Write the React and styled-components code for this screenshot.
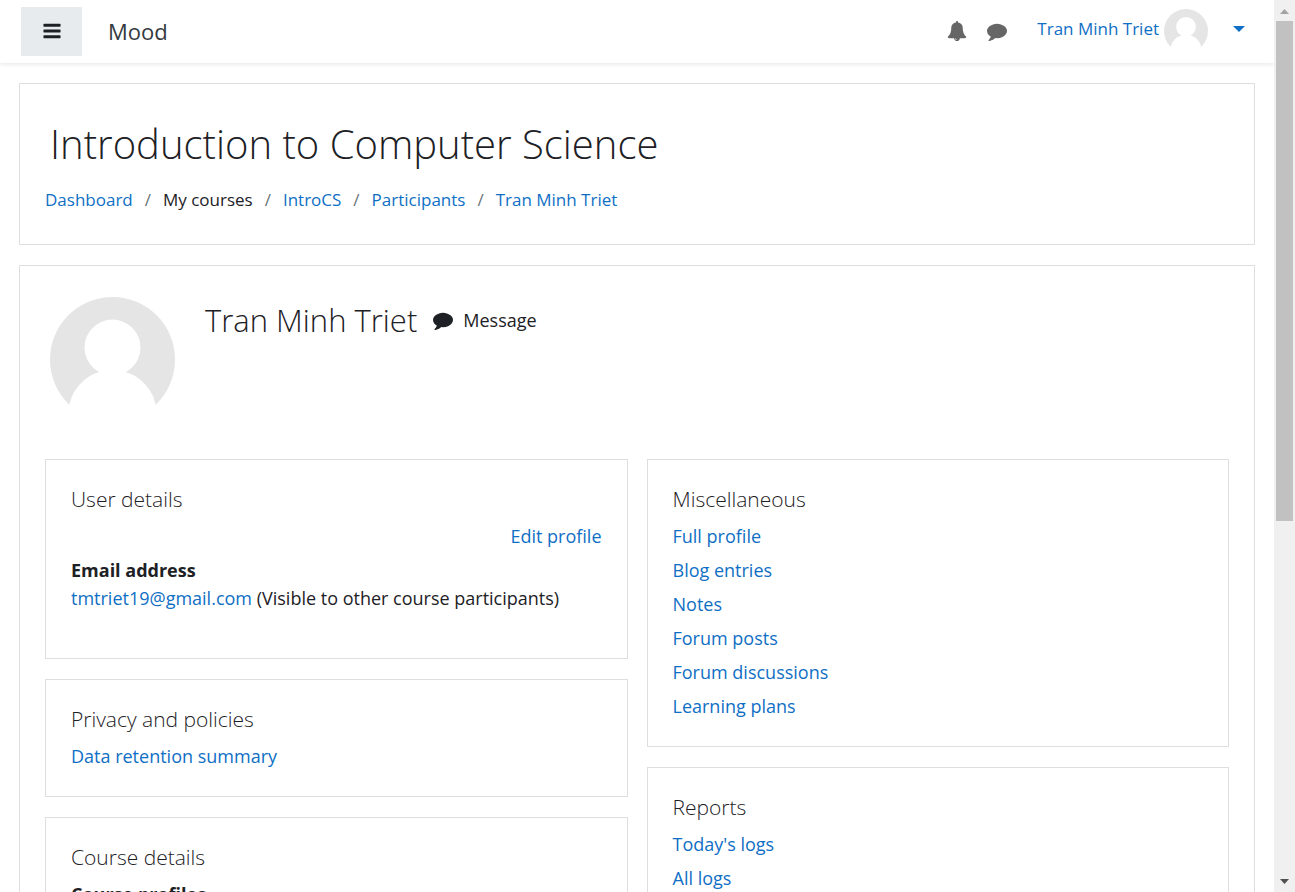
import React from "react";
import styled, { createGlobalStyle } from "styled-components";

const color = {
  link: "#0f6fc5",
  text: "#1d2125",
  icon: "#666666",
  border: "#dedede",
  muted: "#6a737b",
};

const GlobalStyle = createGlobalStyle`
  *, *::before, *::after { box-sizing: border-box; }
  body {
    margin: 0;
    background: #fff;
    color: ${color.text};
    font-family: "Open Sans", "Noto Sans", sans-serif;
    font-size: 18px;
    line-height: 28px;
  }
  h1, h2, h3, ul, ol, dl, dd, dt { margin: 0; padding: 0; }
  ul, ol { list-style: none; }
`;

const Shell = styled.div`
  display: flex;
  height: 100vh;
  overflow: hidden;
`;

const Page = styled.div`
  flex: 1;
  min-width: 0;
  overflow: hidden;
`;

const Navbar = styled.header`
  display: flex;
  align-items: center;
  height: 63px;
  padding: 0 28px 0 21px;
  background: #fff;
  box-shadow: 0 2px 4px rgba(0, 0, 0, 0.08);
`;

const DrawerToggle = styled.button`
  display: grid;
  place-items: center;
  width: 61px;
  height: 49px;
  padding: 0 0 2px;
  border: 0;
  background: #e7ebee;
  color: ${color.text};
`;

const Brand = styled.a`
  margin-left: 26px;
  padding-bottom: 2px;
  color: #343a40;
  font-size: 22px;
  text-decoration: none;
`;

const NavTools = styled.div`
  display: flex;
  align-items: center;
  gap: 20px;
  margin-left: auto;
  padding-bottom: 2px;
`;

const IconButton = styled.button`
  display: grid;
  place-items: center;
  padding: 0;
  border: 0;
  background: none;
  color: ${color.icon};
`;

const UserMenu = styled.button`
  display: flex;
  align-items: center;
  gap: 5px;
  margin-left: 10px;
  padding: 0;
  border: 0;
  background: none;
  color: ${color.link};
  font: inherit;
  font-size: 17px;
`;

const UserName = styled.span`
  padding-bottom: 3px;
`;

const Caret = styled.span`
  margin: 0 1px 4px 20px;
  border: 6px solid transparent;
  border-top-color: ${color.link};
  border-bottom: 0;
`;

const Main = styled.main`
  display: flex;
  flex-direction: column;
  gap: 20px;
  padding: 20px 19px;
`;

const Card = styled.section`
  padding: 25px;
  border: 1px solid ${color.border};
`;

const Title = styled.h1`
  margin: 7px 5px 14px;
  font-size: 40px;
  font-weight: 300;
  line-height: 56px;
`;

const Crumbs = styled.ol`
  display: flex;
  flex-wrap: wrap;
  padding-bottom: 5px;
  font-size: 17px;
`;

const Crumb = styled.li`
  & + &::before {
    content: "/";
    padding: 0 12px;
    color: ${color.muted};
  }
`;

const Link = styled.a`
  color: ${color.link};
  text-decoration: none;
`;

const ProfileHead = styled.div`
  display: flex;
  align-items: flex-start;
  margin-bottom: 37px;
  padding: 6px 5px 0;
`;

const NameRow = styled.div`
  display: flex;
  align-items: center;
  margin-left: 30px;
  padding-top: 1px;
`;

const Name = styled.h2`
  font-size: 31px;
  font-weight: 300;
  line-height: 44px;
`;

const MessageLink = styled.a`
  display: flex;
  align-items: center;
  gap: 10px;
  margin-left: 16px;
  color: ${color.text};
  text-decoration: none;
`;

const Columns = styled.div`
  display: grid;
  grid-template-columns: 1fr 1fr;
  gap: 19px;
`;

const Column = styled.div`
  display: flex;
  flex-direction: column;
  gap: 20px;
`;

const CardTitle = styled.h3`
  margin-bottom: 9px;
  font-size: 21px;
  font-weight: 300;
  line-height: 28px;
`;

const LinkList = styled.ul`
  display: flex;
  flex-direction: column;
  gap: 6px;
  padding-bottom: 1px;
`;

const EditRow = styled.div`
  margin-bottom: 6px;
  text-align: right;
`;

const Details = styled.dl`
  padding-bottom: 21px;

  dt { font-weight: 700; }
`;

const ScrollRail = styled.div`
  display: flex;
  flex-direction: column;
  align-items: center;
  width: 21px;
  background: #f0f0f0;
`;

const ScrollArrow = styled.svg`
  flex: none;
  width: 17px;
  height: 21px;
`;

const ScrollThumb = styled.div`
  width: 17px;
  height: 56%;
  margin-bottom: auto;
  background: #c1c1c1;
`;

const paths = {
  bars: "M1664 1344v128q0 26-19 45t-45 19h-1408q-26 0-45-19t-19-45v-128q0-26 19-45t45-19h1408q26 0 45 19t19 45zm0-512v128q0 26-19 45t-45 19h-1408q-26 0-45-19t-19-45v-128q0-26 19-45t45-19h1408q26 0 45 19t19 45zm0-512v128q0 26-19 45t-45 19h-1408q-26 0-45-19t-19-45v-128q0-26 19-45t45-19h1408q26 0 45 19t19 45z",
  bell: "M912 1696q0-16-16-16-59 0-101.500-42.500t-42.500-101.500q0-16-16-16t-16 16q0 73 51.500 124.500t124.500 51.500q16 0 16-16zm816-288q0 52-38 90t-90 38h-448q0 106-75 181t-181 75-181-75-75-181h-448q-52 0-90-38t-38-90q50-42 91-88t85-119.500 74.500-158.500 50-206 19.500-260q0-152 117-282.500t307-158.500q-8-19-8-39 0-40 28-68t68-28 68 28 28 68q0 20-8 39 190 28 307 158.500t117 282.500q0 139 19.500 260t50 206 74.500 158.500 85 119.500 91 88z",
  comment: "M1792 896q0 174-120 321.500t-326 233-450 85.500q-70 0-145-8-198 175-460 242-49 14-114 22h-5q-15 0-27-10.500t-16-27.500v-1q-3-4-.5-12t2-10 4.500-9.500l6-9 7-8.500 8-9q7-8 31-34.500t34.500-38 31-39.500 32.500-51 27-59 26-76q-157-89-247.500-220t-90.500-281q0-130 71-248.500t191-204.500 286-136.500 348-50.500 348 50.500 286 136.500 191 204.500 71 248.500z",
};

const Icon = ({ name }) => (
  <svg width="20" height="20" viewBox="0 0 1792 1792" fill="currentColor" aria-hidden="true">
    <path d={paths[name]} />
  </svg>
);

const Avatar = ({ size }) => (
  <svg width={size} height={size} viewBox="0 0 125 125" aria-hidden="true">
    <circle cx="62.5" cy="62.5" r="62.5" fill="#e5e5e5" />
    <circle cx="62.5" cy="50.5" r="28" fill="#fff" />
    <circle cx="62.5" cy="117.300" r="44.300" fill="#fff" />
  </svg>
);

const crumbs = [
  { label: "Dashboard", link: true },
  { label: "My courses" },
  { label: "IntroCS", link: true },
  { label: "Participants", link: true },
  { label: "Tran Minh Triet", link: true },
];

const LinkCard = ({ title, links }) => (
  <Card>
    <CardTitle>{title}</CardTitle>
    <LinkList>
      {links.map((label) => (
        <li key={label}>
          <Link href="#">{label}</Link>
        </li>
      ))}
    </LinkList>
  </Card>
);

export default function App() {
  return (
    <Shell>
      <GlobalStyle />
      <Page>
        <Navbar>
          <DrawerToggle type="button" aria-label="Side panel">
            <Icon name="bars" />
          </DrawerToggle>
          <Brand href="#">Mood</Brand>
          <NavTools>
            <IconButton type="button" aria-label="Notifications">
              <Icon name="bell" />
            </IconButton>
            <IconButton type="button" aria-label="Messages">
              <Icon name="comment" />
            </IconButton>
            <UserMenu type="button">
              <UserName>Tran Minh Triet</UserName>
              <Avatar size={44} />
              <Caret />
            </UserMenu>
          </NavTools>
        </Navbar>
        <Main>
          <Card>
            <Title>Introduction to Computer Science</Title>
            <nav aria-label="Breadcrumb">
              <Crumbs>
                {crumbs.map(({ label, link }) => (
                  <Crumb key={label}>{link ? <Link href="#">{label}</Link> : label}</Crumb>
                ))}
              </Crumbs>
            </nav>
          </Card>
          <Card>
            <ProfileHead>
              <Avatar size={125} />
              <NameRow>
                <Name>Tran Minh Triet</Name>
                <MessageLink href="#">
                  <Icon name="comment" />
                  Message
                </MessageLink>
              </NameRow>
            </ProfileHead>
            <Columns>
              <Column>
                <Card>
                  <CardTitle>User details</CardTitle>
                  <EditRow>
                    <Link href="#">Edit profile</Link>
                  </EditRow>
                  <Details>
                    <dt>Email address</dt>
                    <dd>
                      <Link href="#">tmtriet19@gmail.com</Link> (Visible to other course participants)
                    </dd>
                  </Details>
                </Card>
                <LinkCard title="Privacy and policies" links={["Data retention summary"]} />
                <Card>
                  <CardTitle>Course details</CardTitle>
                  <Details>
                    <dt>Course profiles</dt>
                    <dd>
                      <Link href="#">Introduction to Computer Science</Link>
                    </dd>
                  </Details>
                </Card>
              </Column>
              <Column>
                <LinkCard
                  title="Miscellaneous"
                  links={["Full profile", "Blog entries", "Notes", "Forum posts", "Forum discussions", "Learning plans"]}
                />
                <LinkCard title="Reports" links={["Today's logs", "All logs"]} />
              </Column>
            </Columns>
          </Card>
        </Main>
      </Page>
      <ScrollRail aria-hidden="true">
        <ScrollArrow viewBox="0 0 17 21">
          <path d="M4 14h9L8.500 9z" fill="#a3a3a3" />
        </ScrollArrow>
        <ScrollThumb />
        <ScrollArrow viewBox="0 0 17 21">
          <path d="M4 8h9L8.500 13z" fill="#505050" />
        </ScrollArrow>
      </ScrollRail>
    </Shell>
  );
}
